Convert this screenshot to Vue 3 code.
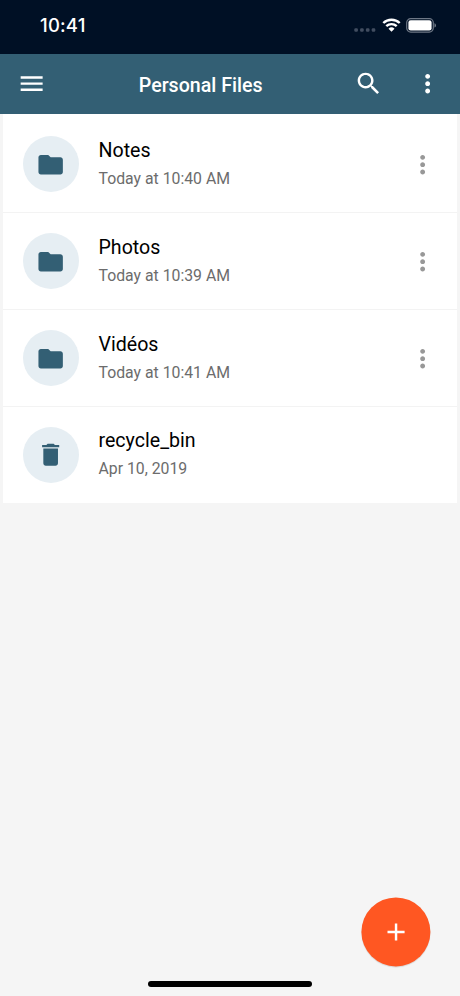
<script setup>
const files = [
  { name: 'Notes', date: 'Today at 10:40 AM', type: 'folder' },
  { name: 'Photos', date: 'Today at 10:39 AM', type: 'folder' },
  { name: 'Vidéos', date: 'Today at 10:41 AM', type: 'folder' },
  { name: 'recycle_bin', date: 'Apr 10, 2019', type: 'bin' },
]
const icons = {
  folder: 'M10 4H4c-1.1 0-1.99.9-1.99 2L2 18c0 1.1.9 2 2 2h16c1.1 0 2-.9 2-2V8c0-1.1-.9-2-2-2h-8l-2-2z',
  bin: 'M6 19c0 1.1.9 2 2 2h8c1.1 0 2-.9 2-2V7H6v12zM19 4h-3.5l-1-1h-5l-1 1H5v2h14V4z',
  more: 'M12 8c1.1 0 2-.9 2-2s-.9-2-2-2-2 .9-2 2 .9 2 2 2zm0 2c-1.1 0-2 .9-2 2s.9 2 2 2 2-.9 2-2-.9-2-2-2zm0 6c-1.1 0-2 .9-2 2s.9 2 2 2 2-.9 2-2-.9-2-2-2z',
  menu: 'M3 18h18v-2H3v2zm0-5h18v-2H3v2zm0-7v2h18V6H3z',
  search: 'M15.5 14h-.79l-.28-.27C15.41 12.59 16 11.11 16 9.5 16 5.91 13.09 3 9.5 3S3 5.91 3 9.5 5.91 16 9.5 16c1.61 0 3.09-.59 4.23-1.57l.27.28v.79l5 4.99L20.49 19l-4.99-5zm-6 0C7.01 14 5 11.99 5 9.5S7.01 5 9.5 5 14 7.01 14 9.5 11.99 14 9.5 14z',
  plus: 'M19 13h-6v6h-2v-6H5v-2h6V5h2v6h6v2z',
}
</script>

<template>
  <div class="screen">
    <div class="status">
      <span class="time">10:41</span>
      <div class="indicators">
        <svg class="dots" width="22" height="4" viewBox="0 0 22 4">
          <rect v-for="i in 4" :key="i" :x="(i - 1) * 5.8 + 0.3" y="0.2" width="3.6" height="3.5" rx="1.2" />
        </svg>
        <svg class="wifi" width="19" height="14" viewBox="0 0 19 14">
          <path d="M1.3 5a11.800 11.800 0 0 1 16.400 0M4.300 8.200a7.500 7.500 0 0 1 10.400 0" />
          <path class="solid" d="M6.500 10.700a4.400 4.400 0 0 1 6 0l-3 3z" />
        </svg>
        <svg class="battery" width="31" height="15" viewBox="0 0 31 15">
          <rect class="case" x="0.7" y="0.7" width="26.6" height="13.4" rx="4" />
          <rect class="charge" x="2.4" y="2.3" width="23.2" height="10.2" rx="2.3" />
          <path class="tip" d="M28.500 5.200c1.900.7 1.900 3.700 0 4.400z" />
        </svg>
      </div>
    </div>

    <header class="bar">
      <svg class="icon" viewBox="0 0 24 24"><path :d="icons.menu" /></svg>
      <h1 class="title">Personal Files</h1>
      <svg class="icon search" viewBox="0 0 24 24"><path :d="icons.search" /></svg>
      <svg class="icon" viewBox="0 0 24 24"><path :d="icons.more" /></svg>
    </header>

    <main class="list">
      <div v-for="file in files" :key="file.name" class="row">
        <div class="avatar">
          <svg class="icon" viewBox="0 0 24 24"><path :d="icons[file.type]" /></svg>
        </div>
        <div class="text">
          <div class="name">{{ file.name }}</div>
          <div class="date">{{ file.date }}</div>
        </div>
        <svg v-if="file.type === 'folder'" class="icon more" viewBox="0 0 24 24"><path :d="icons.more" /></svg>
      </div>
    </main>

    <button class="fab">
      <svg class="icon" viewBox="0 0 24 24"><path :d="icons.plus" /></svg>
    </button>
    <div class="home"></div>
  </div>
</template>

<style>
body {
  margin: 0;
}
</style>

<style scoped>
.screen {
  position: relative;
  box-sizing: border-box;
  width: 460px;
  height: 996px;
  overflow: hidden;
  background: #f5f5f5;
  font-family: Roboto, sans-serif;
}
.icon {
  display: block;
  flex: none;
  width: 29.3px;
  height: 29.3px;
  fill: currentColor;
}
.status {
  box-sizing: border-box;
  height: 54px;
  padding: 0 23px 4px 40px;
  display: flex;
  align-items: center;
  justify-content: space-between;
  background: #001025;
  color: #fff;
}
.time {
  padding-bottom: 1px;
  font: 550 18.5px/24px Inter, sans-serif;
  letter-spacing: 0.2px;
}
.indicators {
  display: flex;
  align-items: center;
}
.dots {
  margin: 9px 6px 0 0;
  fill: #414d60;
}
.wifi {
  margin: 0 5.5px 1px 0;
  fill: none;
  stroke: #fff;
  stroke-width: 2.4;
}
.wifi .solid {
  fill: #fff;
  stroke: none;
}
.case {
  fill: none;
  stroke: #6d7785;
  stroke-width: 1.2;
}
.charge {
  fill: #fff;
}
.tip {
  fill: #7b8491;
}
.bar {
  box-sizing: border-box;
  height: 60px;
  padding: 0 18px 0 17px;
  display: flex;
  align-items: center;
  background: #335f74;
  color: #fff;
}
.title {
  flex: 1;
  margin: 3px 0 0 92.5px;
  font-size: 19.6px;
  font-weight: 500;
  line-height: 25px;
}
.search {
  margin-right: 29.5px;
}
.list {
  margin: 0 3px;
  padding-top: 2px;
  background: #fff;
}
.row {
  box-sizing: border-box;
  height: 97px;
  padding: 0 20px 0 19.5px;
  display: flex;
  align-items: center;
  border-bottom: 1px solid #f3f3f3;
}
.row:last-child {
  border-bottom-color: transparent;
  height: 96px;
}
.row:last-child .text {
  padding-bottom: 1px;
}
.avatar {
  width: 56px;
  height: 56px;
  margin-right: 20px;
  display: flex;
  align-items: center;
  justify-content: center;
  border-radius: 50%;
  background: #e6eef3;
  color: #335f74;
}
.avatar .icon,
.more {
  margin-top: 0.6px;
}
.text {
  flex: 1;
}
.name {
  padding-top: 1px;
  font-size: 19.6px;
  line-height: 28px;
  color: #000;
}
.date {
  margin-top: 1px;
  font-size: 15.8px;
  line-height: 26px;
  color: #6c6c6c;
}
.more {
  color: #989898;
}
.fab {
  position: absolute;
  left: 361px;
  top: 897px;
  width: 69px;
  height: 69px;
  padding: 0;
  display: flex;
  align-items: center;
  justify-content: center;
  border: 0;
  border-radius: 50%;
  background: #ff5722;
  color: #fff;
  box-shadow: 0 1px 1px rgba(0, 0, 0, 0.12);
  transform: translate(0.4px, 0.4px);
}
.home {
  position: absolute;
  left: 148px;
  top: 981px;
  width: 164px;
  height: 6px;
  border-radius: 3px;
  background: #000;
}
</style>
